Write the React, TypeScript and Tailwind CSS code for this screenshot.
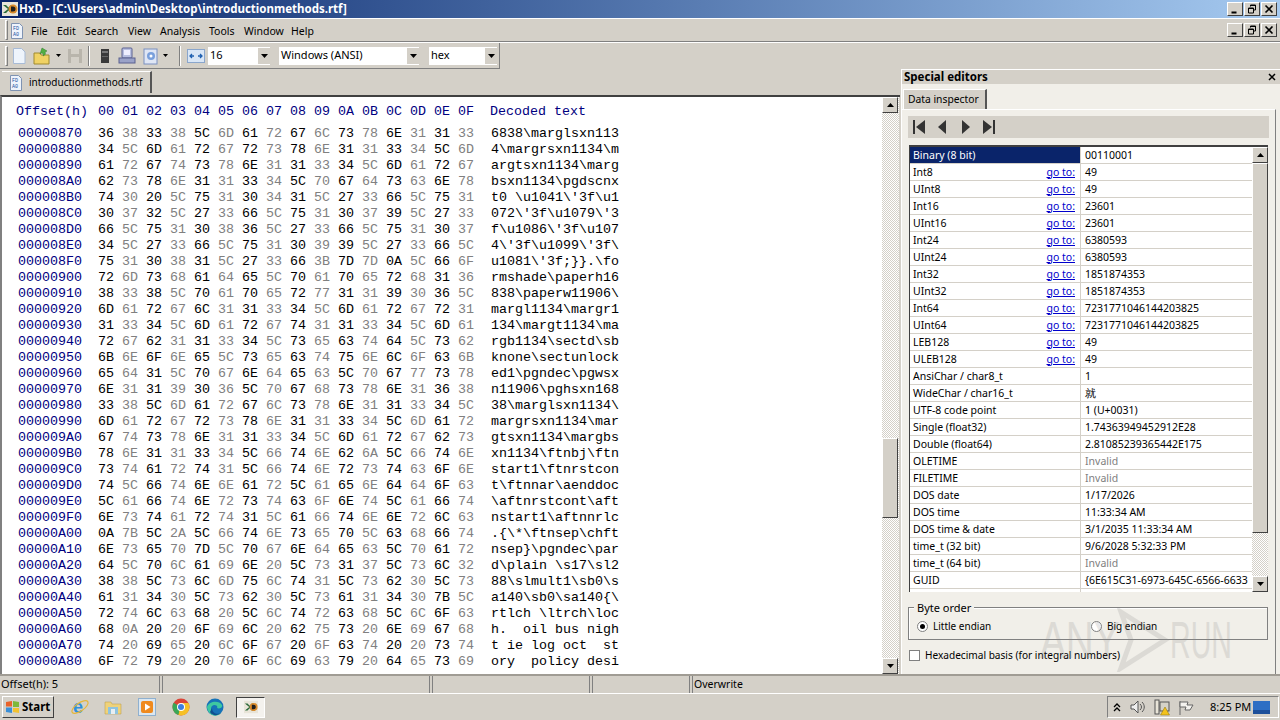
import React from "react";

const hexRows = [
  "36 38 33 38 5C 6D 61 72 67 6C 73 78 6E 31 31 33",
  "34 5C 6D 61 72 67 72 73 78 6E 31 31 33 34 5C 6D",
  "61 72 67 74 73 78 6E 31 31 33 34 5C 6D 61 72 67",
  "62 73 78 6E 31 31 33 34 5C 70 67 64 73 63 6E 78",
  "74 30 20 5C 75 31 30 34 31 5C 27 33 66 5C 75 31",
  "30 37 32 5C 27 33 66 5C 75 31 30 37 39 5C 27 33",
  "66 5C 75 31 30 38 36 5C 27 33 66 5C 75 31 30 37",
  "34 5C 27 33 66 5C 75 31 30 39 39 5C 27 33 66 5C",
  "75 31 30 38 31 5C 27 33 66 3B 7D 7D 0A 5C 66 6F",
  "72 6D 73 68 61 64 65 5C 70 61 70 65 72 68 31 36",
  "38 33 38 5C 70 61 70 65 72 77 31 31 39 30 36 5C",
  "6D 61 72 67 6C 31 31 33 34 5C 6D 61 72 67 72 31",
  "31 33 34 5C 6D 61 72 67 74 31 31 33 34 5C 6D 61",
  "72 67 62 31 31 33 34 5C 73 65 63 74 64 5C 73 62",
  "6B 6E 6F 6E 65 5C 73 65 63 74 75 6E 6C 6F 63 6B",
  "65 64 31 5C 70 67 6E 64 65 63 5C 70 67 77 73 78",
  "6E 31 31 39 30 36 5C 70 67 68 73 78 6E 31 36 38",
  "33 38 5C 6D 61 72 67 6C 73 78 6E 31 31 33 34 5C",
  "6D 61 72 67 72 73 78 6E 31 31 33 34 5C 6D 61 72",
  "67 74 73 78 6E 31 31 33 34 5C 6D 61 72 67 62 73",
  "78 6E 31 31 33 34 5C 66 74 6E 62 6A 5C 66 74 6E",
  "73 74 61 72 74 31 5C 66 74 6E 72 73 74 63 6F 6E",
  "74 5C 66 74 6E 6E 61 72 5C 61 65 6E 64 64 6F 63",
  "5C 61 66 74 6E 72 73 74 63 6F 6E 74 5C 61 66 74",
  "6E 73 74 61 72 74 31 5C 61 66 74 6E 6E 72 6C 63",
  "0A 7B 5C 2A 5C 66 74 6E 73 65 70 5C 63 68 66 74",
  "6E 73 65 70 7D 5C 70 67 6E 64 65 63 5C 70 61 72",
  "64 5C 70 6C 61 69 6E 20 5C 73 31 37 5C 73 6C 32",
  "38 38 5C 73 6C 6D 75 6C 74 31 5C 73 62 30 5C 73",
  "61 31 34 30 5C 73 62 30 5C 73 61 31 34 30 7B 5C",
  "72 74 6C 63 68 20 5C 6C 74 72 63 68 5C 6C 6F 63",
  "68 0A 20 20 6F 69 6C 20 62 75 73 20 6E 69 67 68",
  "74 20 69 65 20 6C 6F 67 20 6F 63 74 20 20 73 74",
  "6F 72 79 20 20 70 6F 6C 69 63 79 20 64 65 73 69",
];

const headerCols = ["00", "01", "02", "03", "04", "05", "06", "07", "08", "09", "0A", "0B", "0C", "0D", "0E", "0F"];

const inspector: { label: string; value: string; goto?: boolean; dim?: boolean }[] = [
  { label: "Binary (8 bit)", value: "00110001" },
  { label: "Int8", value: "49", goto: true },
  { label: "UInt8", value: "49", goto: true },
  { label: "Int16", value: "23601", goto: true },
  { label: "UInt16", value: "23601", goto: true },
  { label: "Int24", value: "6380593", goto: true },
  { label: "UInt24", value: "6380593", goto: true },
  { label: "Int32", value: "1851874353", goto: true },
  { label: "UInt32", value: "1851874353", goto: true },
  { label: "Int64", value: "7231771046144203825", goto: true },
  { label: "UInt64", value: "7231771046144203825", goto: true },
  { label: "LEB128", value: "49", goto: true },
  { label: "ULEB128", value: "49", goto: true },
  { label: "AnsiChar / char8_t", value: "1" },
  { label: "WideChar / char16_t", value: "就" },
  { label: "UTF-8 code point", value: "1 (U+0031)" },
  { label: "Single (float32)", value: "1.74363949452912E28" },
  { label: "Double (float64)", value: "2.81085239365442E175" },
  { label: "OLETIME", value: "Invalid", dim: true },
  { label: "FILETIME", value: "Invalid", dim: true },
  { label: "DOS date", value: "1/17/2026" },
  { label: "DOS time", value: "11:33:34 AM" },
  { label: "DOS time & date", value: "3/1/2035 11:33:34 AM" },
  { label: "time_t (32 bit)", value: "9/6/2028 5:32:33 PM" },
  { label: "time_t (64 bit)", value: "Invalid", dim: true },
  { label: "GUID", value: "{6E615C31-6973-645C-6566-6633" },
  { label: "Disassembly (x86-16)", value: "xor [bx+di+6Eh],bl" },
];

const menus: { name: string; w: string }[] = [
  { name: "File", w: "w-[26px]" },
  { name: "Edit", w: "w-[28px]" },
  { name: "Search", w: "w-[43px]" },
  { name: "View", w: "w-[32px]" },
  { name: "Analysis", w: "w-[49px]" },
  { name: "Tools", w: "w-[35px]" },
  { name: "Window", w: "w-[47px]" },
  { name: "Help", w: "w-[30px]" },
];

const raised = "border border-t-white border-l-white border-r-[#404040] border-b-[#404040] bg-[#d4d0c8]";
const dither = "bg-[repeating-conic-gradient(#d4d0c8_0%_25%,#ffffff_0%_50%)] bg-[length:2px_2px]";

function decode(row: string) {
  return row
    .split(" ")
    .map((h) => {
      const c = parseInt(h, 16);
      return c < 32 ? "." : String.fromCharCode(c);
    })
    .join("");
}

function DocIcon() {
  return (
    <svg width="16" height="16" viewBox="0 0 16 16">
      <path d="M2.500 .5h8l3 3v12h-11z" fill="#eef3fb" stroke="#7f93b2" />
      <text x="4" y="7" fontSize="5" fill="#2050a0" fontFamily="Liberation Mono">FD</text>
      <text x="4" y="13" fontSize="5" fill="#2050a0" fontFamily="Liberation Mono">A0</text>
    </svg>
  );
}

function HxdIcon({ size = 16 }: { size?: number }) {
  return (
    <svg width={size} height={size} viewBox="0 0 16 16">
      <rect x="0" y="1" width="16" height="14" fill="#e8e4d8" />
      <path d="M1 4l5 4-5 4h3l2.500-2.500L9 12h2L8 8l3-4H9L6.500 6.500 4 4z" fill="#2a6a3a" />
      <circle cx="11" cy="8" r="4.500" fill="#d98a2b" />
      <path d="M9 5.500h2a2.500 2.500 0 010 5H9z" fill="#1e1e1e" />
    </svg>
  );
}

function WinButton({ kind }: { kind: "min" | "max" | "close" }) {
  return (
    <div className={`flex h-[14px] w-[16px] items-center justify-center ${raised}`}>
      <svg width="10" height="10" viewBox="0 0 10 10" fill="none" stroke="#000">
        {kind === "min" && <path d="M1.500 8.500h5" strokeWidth="2" />}
        {kind === "max" && (
          <>
            <path d="M3.500 2.500v-1.500h5v5h-2" strokeWidth="1" />
            <path d="M1.500 4h5v5h-5z" strokeWidth="1" />
            <path d="M1.500 4.500h5M3.500 1.500h5" strokeWidth="1" />
          </>
        )}
        {kind === "close" && <path d="M1.500 1.500l7 7M8.500 1.500l-7 7" strokeWidth="1.600" />}
      </svg>
    </div>
  );
}

function Combo({ text, w }: { text: string; w: string }) {
  return (
    <div className={`flex h-[18px] items-center bg-white ${w}`}>
      <span className="flex-1 truncate pl-[2px] text-[11px] text-black">{text}</span>
      <div className="flex h-[16px] w-[12px] items-center justify-center bg-[#d4d0c8]">
        <svg width="7" height="4" viewBox="0 0 7 4"><path d="M0 0h7L3.500 4z" fill="#000" /></svg>
      </div>
    </div>
  );
}

function Grip() {
  return <div className="h-[20px] w-[3px] border border-t-white border-l-white border-r-[#808080] border-b-[#808080]" />;
}

function Caret() {
  return (
    <svg width="5" height="3" viewBox="0 0 5 3" className="ml-[4px]"><path d="M0 0h5L2.500 3z" fill="#000" /></svg>
  );
}

function ScrollBtn({ up }: { up: boolean }) {
  return (
    <div className={`flex h-[16px] w-[16px] shrink-0 items-center justify-center ${raised}`}>
      <svg width="7" height="4" viewBox="0 0 7 4">
        <path d={up ? "M0 4h7L3.500 0z" : "M0 0h7L3.500 4z"} fill="#000" />
      </svg>
    </div>
  );
}

function NavIcon({ kind }: { kind: "first" | "prev" | "next" | "last" }) {
  return (
    <svg width="15" height="14" viewBox="0 0 15 14" fill="#333">
      {kind === "first" && (<><rect x="1" y="0" width="2" height="14" /><path d="M13 0v14L4 7z" /></>)}
      {kind === "prev" && <path d="M11 0v14L3 7z" />}
      {kind === "next" && <path d="M4 0v14l8-7z" />}
      {kind === "last" && (<><rect x="12" y="0" width="2" height="14" /><path d="M2 0v14l9-7z" /></>)}
    </svg>
  );
}

function TaskIcons() {
  return (
    <div className="flex items-center">
      {/* IE */}
      <svg width="20" height="20" viewBox="0 0 20 20" className="ml-[16px]">
        <text x="3" y="16" fontSize="18" fontWeight="700" fill="#2f8fdc" fontFamily="Liberation Sans">e</text>
        <ellipse cx="10" cy="10" rx="9.500" ry="4" fill="none" stroke="#e5b73b" strokeWidth="1.200" transform="rotate(-35 10 10)" />
      </svg>
      {/* Explorer */}
      <svg width="18" height="18" viewBox="0 0 18 18" className="ml-[14px]">
        <path d="M1 4h6l1 2h9v10H1z" fill="#efd27a" stroke="#b99a45" strokeWidth=".5" />
        <path d="M4 9h10v7H4z" fill="#8fc3df" />
        <rect x="7" y="11" width="4" height="5" fill="#e8eef2" />
      </svg>
      {/* WMP */}
      <svg width="18" height="18" viewBox="0 0 18 18" className="ml-[16px]">
        <rect x=".5" y=".5" width="17" height="17" fill="#dbe7f1" stroke="#8fb0cf" />
        <rect x="3" y="3" width="12" height="12" rx="2" fill="#ef8a1f" />
        <path d="M7 5.500v7l5.500-3.500z" fill="#fff" />
      </svg>
      {/* Chrome */}
      <svg width="18" height="18" viewBox="0 0 18 18" className="ml-[16px]">
        <circle cx="9" cy="9" r="8.500" fill="#db4437" />
        <path d="M9 9L1.600 4.800A8.500 8.500 0 006.500 17.100z" fill="#3aa757" />
        <path d="M9 5h7.500A8.500 8.500 0 019 17.500L6.500 17z" fill="#f6c026" />
        <circle cx="9" cy="9" r="4" fill="#fff" />
        <circle cx="9" cy="9" r="3" fill="#3f7fe0" />
      </svg>
      {/* Edge */}
      <svg width="18" height="18" viewBox="0 0 18 18" className="ml-[16px]">
        <circle cx="9" cy="9" r="8.500" fill="#1673b8" />
        <path d="M1 9C3 3 13 2 16 7c1 3-3 4-5 3 2-3-6-5-6 1 0 4 5 7 10 4-4 5-13 3-14-6z" fill="#3ec8a0" />
        <path d="M6 10c0 5 5 7 9 5-3 3-9 3-11-1z" fill="#0f4f8f" />
      </svg>
      {/* HxD button */}
      <div className="ml-[12px] flex h-[21px] w-[29px] items-center justify-center border border-t-[#404040] border-l-[#404040] border-r-white border-b-white bg-[#f4f2ee]">
        <HxdIcon size={14} />
      </div>
    </div>
  );
}

function Tray() {
  return (
    <div className="flex h-[22px] w-[172px] items-center border border-t-[#808080] border-l-[#808080] border-r-white border-b-white text-[11px]">
      <svg width="8" height="9" viewBox="0 0 8 9" fill="none" stroke="#000" strokeWidth="1.300" className="ml-[5px] shrink-0">
        <path d="M1 4l3-3 3 3M1 8l3-3 3 3" />
      </svg>
      <svg width="16" height="14" viewBox="0 0 16 14" fill="none" stroke="#555" className="ml-[9px] shrink-0">
        <path d="M1 5h3l4-4v12l-4-4H1z" fill="#eee" />
        <path d="M10 4c2 2 2 4 0 6M12 2c3 3 3 7 0 10" />
      </svg>
      <svg width="18" height="17" viewBox="0 0 18 17" className="ml-[7px] shrink-0">
        <rect x="2" y="1" width="4" height="14" fill="#e8e4d8" stroke="#555" />
        <rect x="7" y="3" width="9" height="9" fill="#d5d2c8" stroke="#555" />
        <path d="M12 8l4.500 8h-9z" fill="#f3c21b" stroke="#8a6d00" strokeWidth=".5" />
      </svg>
      <svg width="16" height="15" viewBox="0 0 16 15" fill="none" stroke="#666" className="ml-[7px] shrink-0">
        <path d="M2 1v14" />
        <path d="M2 2h8l-1 3h6l-3 5H7l1-3H2z" fill="#f4f2ee" />
      </svg>
      <span className="ml-[16px] w-[40px] shrink-0 whitespace-nowrap text-black">8:25 PM</span>
      <svg width="17" height="13" viewBox="0 0 17 13" className="ml-[3px] shrink-0">
        <rect width="17" height="13" fill="#2e6fc4" />
        <rect y="9" width="17" height="4" fill="#1d4f9a" />
      </svg>
    </div>
  );
}

export default function App() {
  return (
    <div className="relative flex h-[720px] w-[1280px] flex-col overflow-hidden bg-[#d4d0c8] font-['Noto_Sans',sans-serif] text-[11px] text-black">
      {/* Title bar */}
      <div className="flex h-[18px] shrink-0 items-center bg-gradient-to-r from-[#0a246a] to-[#a6caf0] pr-[3px]">
        <div className="ml-[2px] mr-px"><HxdIcon /></div>
        <span className="text-[11.500px] font-bold text-white">HxD - [C:\Users\admin\Desktop\introductionmethods.rtf]</span>
        <div className="ml-auto flex gap-[1px]">
          <WinButton kind="min" />
          <WinButton kind="max" />
          <WinButton kind="close" />
        </div>
      </div>
      <div className="h-px shrink-0 bg-white" />

      {/* Menu bar */}
      <div className="flex h-[23px] shrink-0 items-center border-b border-b-[#808080] pl-[5px] pr-[3px]">
        <Grip />
        <div className="ml-px mr-[6px] mt-px"><DocIcon /></div>
        <div className="mt-[3px] flex text-[10.500px]">
          {menus.map((m) => (
            <span key={m.name} className={m.w}>{m.name}</span>
          ))}
        </div>
        <div className="ml-auto flex gap-[1px]">
          <WinButton kind="min" />
          <WinButton kind="max" />
          <WinButton kind="close" />
        </div>
      </div>

      {/* Toolbar */}
      <div className="h-px shrink-0 bg-white" />
      <div className="flex h-[26px] w-[500px] shrink-0 items-center border-b border-r border-b-[#808080] border-r-[#808080] pl-[5px]">
        <Grip />
        <svg width="16" height="18" viewBox="0 0 16 18" className="ml-[3px]">
          <path d="M2.500 1.500h8l3.500 3.500v11.500H2.500z" fill="#eef4fc" stroke="#a8bbd6" />
        </svg>
        <svg width="19" height="18" viewBox="0 0 19 18" className="ml-[6px]">
          <path d="M1 6h6l1 2h8v9H1z" fill="#f0d264" stroke="#a08a30" />
          <path d="M9 1l5 3-2 1c1 2 0 3-2 4 1-2 0-3-2-3l-1 1z" fill="#52b043" stroke="#2f7d2a" strokeWidth=".5" />
        </svg>
        <Caret />
        <svg width="16" height="16" viewBox="0 0 16 16" className="ml-[6px]">
          <path d="M1 1h14v14H1z" fill="#b9b5ac" />
          <rect x="4" y="1" width="8" height="5" fill="#d4d0c8" />
          <rect x="4" y="9" width="8" height="6" fill="#d4d0c8" />
        </svg>
        <div className="ml-[5px] h-[20px] w-[2px] border-l border-r border-l-[#808080] border-r-white" />
        <svg width="14" height="16" viewBox="0 0 14 16" className="ml-[8px]">
          <rect x="3" y="1" width="8" height="14" fill="#3a3a3a" />
          <rect x="4" y="3" width="6" height="2" fill="#777" />
          <rect x="4" y="8" width="6" height="1" fill="#666" />
        </svg>
        <svg width="18" height="18" viewBox="0 0 18 18" className="ml-[6px]">
          <rect x="4" y="1" width="10" height="10" rx="1" fill="#b8bfe0" stroke="#5a6090" />
          <rect x="6" y="3" width="6" height="5" fill="#eef" />
          <rect x="1" y="11" width="16" height="5" fill="#9aa2c8" stroke="#5a6090" />
        </svg>
        <svg width="16" height="18" viewBox="0 0 16 18" className="ml-[7px]">
          <rect x="1" y="2" width="13" height="15" fill="#dfe6f5" stroke="#7a90c0" />
          <circle cx="8" cy="9" r="4" fill="#7aa0dc" />
          <circle cx="8" cy="9" r="1.500" fill="#fff" />
        </svg>
        <Caret />
        <div className="ml-[11px] h-[20px] w-[2px] border-l border-r border-l-[#808080] border-r-white" />
        <svg width="18" height="14" viewBox="0 0 18 14" className="ml-[6px]">
          <rect x=".5" y=".5" width="17" height="13" fill="#d9e6f6" stroke="#8aa6cc" />
          <path d="M3 7h4M5 5L3 7l2 2M15 7h-4M13 5l2 2-2 2" fill="none" stroke="#2060b0" strokeWidth="1.300" />
        </svg>
        <div className="ml-[3px]"><Combo text="16" w="w-[62px]" /></div>
        <div className="ml-[9px]"><Combo text="Windows (ANSI)" w="w-[140px]" /></div>
        <div className="ml-[10px]"><Combo text="hex" w="w-[68px]" /></div>
      </div>

      {/* Workspace */}
      <div className="flex min-h-0 flex-1">
        <div className="flex w-[900px] shrink-0 flex-col">
          {/* Tab strip */}
          <div className="flex h-[26px] shrink-0 items-start pl-[2px] pt-[2px]">
            <div className="flex h-[22px] w-[150px] items-center border-r-2 border-t border-r-[#555] border-t-white pl-[6px]">
              <DocIcon />
              <span className="ml-[5px] text-[10px]">introductionmethods.rtf</span>
            </div>
          </div>

          {/* Hex view */}
          <div className="flex min-h-0 flex-1 border-l-2 border-t-2 border-l-[#808080] border-t-[#404040] bg-white">
            <div className="min-w-0 flex-1 whitespace-pre font-['Liberation_Mono',monospace] text-[13.330px] leading-4">
              <div className="ml-[14px] mt-[7px] mb-[6px] flex text-[#000080]">
                <span className="w-[82px]">Offset(h)</span>
                {headerCols.map((c) => (
                  <span key={c} className="w-[24px]">{c}</span>
                ))}
                <span className="ml-[8px]">Decoded text</span>
              </div>
              {hexRows.map((row, i) => (
                <div key={i} className="ml-[16px] flex">
                  <span className="w-[80px] text-[#000080]">{(0x870 + i * 16).toString(16).toUpperCase().padStart(8, "0")}</span>
                  {row.split(" ").map((b, j) => (
                    <span key={j} className={`w-[24px] ${j % 2 === 0 ? "text-black" : "text-[#808080]"}`}>{b}</span>
                  ))}
                  <span className="ml-[9px] text-black">{decode(row)}</span>
                </div>
              ))}
            </div>
            <div className={`flex w-[17px] shrink-0 flex-col ${dither}`}>
              <ScrollBtn up />
              <div className={`mt-[325px] h-[80px] w-[16px] ${raised}`} />
              <div className="flex-1" />
              <ScrollBtn up={false} />
            </div>
            <div className="w-px bg-[#d4d0c8]" />
          </div>
        </div>

        {/* Special editors */}
        <div className="ml-px flex min-w-0 flex-1 flex-col border-t border-l border-t-white border-l-white bg-[#f1efe9]">
          <div className="flex h-[14px] shrink-0 items-center justify-between bg-[#d4d0c8] pl-[2px] pr-[4px]">
            <span className="text-[11.500px] font-bold">Special editors</span>
            <svg width="8" height="8" viewBox="0 0 8 8" fill="none" stroke="#000" strokeWidth="1.500"><path d="M1 1l6 6M7 1L1 7" /></svg>
          </div>
          <div className="flex h-[25px] shrink-0 items-end pl-[1px]">
            <div className="flex h-[20px] w-[84px] items-center border-t border-l border-r-2 border-t-white border-l-white border-r-[#555] bg-[#d4d0c8] pl-[4px] text-[10.300px]">
              Data inspector
            </div>
          </div>
          <div className="mr-[4px] flex min-h-0 flex-1 flex-col border-t border-r border-t-white border-r-[#808080] pl-[6px] pr-[7px]">
            <div className="mt-[6px] -mr-px flex h-[22px] shrink-0 items-center gap-[8px] bg-[#d4d0c8] pl-[4px]">
              <NavIcon kind="first" />
              <NavIcon kind="prev" />
              <NavIcon kind="next" />
              <NavIcon kind="last" />
            </div>

            <div className="ml-px mt-[7px] flex h-[447px] shrink-0 overflow-hidden border-t-2 border-l border-t-[#404040] border-l-[#404040] bg-white text-[10.500px]">
              <div className="min-w-0 flex-1 overflow-hidden">
                {inspector.map((row, i) => (
                  <div key={row.label} className="flex h-[17px] shrink-0 border-b border-b-[#d4d0c8]">
                    <div className={`flex w-[171px] items-center justify-between border-r border-r-[#d4d0c8] pl-[3px] pr-[5px] pt-px ${i === 0 ? "bg-[#0a246a] text-white" : ""}`}>
                      <span>{row.label}</span>
                      {row.goto && <span className="text-[#0000cc] underline">go to:</span>}
                    </div>
                    <div className={`min-w-0 flex-1 overflow-hidden whitespace-nowrap pl-[4px] leading-[16px] ${row.dim ? "text-[#808080]" : ""}`}>
                      {row.value}
                    </div>
                  </div>
                ))}
              </div>
              <div className={`flex w-[16px] shrink-0 flex-col ${dither}`}>
                <ScrollBtn up />
                <div className={`h-[370px] w-[16px] ${raised}`} />
                <div className="flex-1" />
                <ScrollBtn up={false} />
              </div>
            </div>

            {/* Byte order */}
            <div className="relative mt-[15px] flex h-[33px] shrink-0 items-center border border-[#808080] shadow-[inset_1px_1px_0_#fff]">
              <span className="absolute -top-[8px] left-[5px] bg-[#f1efe9] px-[3px]">Byte order</span>
              <div className="ml-[8px] flex w-[174px] items-center gap-[5px] pt-[6px] text-[10px]">
                <span className="flex h-[11px] w-[11px] items-center justify-center rounded-full border border-[#808080] bg-white">
                  <span className="h-[5px] w-[5px] rounded-full bg-black" />
                </span>
                Little endian
              </div>
              <div className="flex items-center gap-[5px] pt-[6px] text-[10px]">
                <span className="h-[11px] w-[11px] rounded-full border border-[#808080] bg-white" />
                Big endian
              </div>
            </div>
            <div className="ml-px mt-[8px] flex items-center gap-[5px] text-[10.100px]">
              <span className="h-[11px] w-[11px] border border-[#808080] bg-white" />
              Hexadecimal basis (for integral numbers)
            </div>
          </div>
        </div>
      </div>

      {/* Status bar */}
      <div className="flex h-[19px] shrink-0 border-t-2 border-t-[#a09c94]">
        <div className="w-[160px] border-r border-r-[#808080] pl-px leading-[16px]">Offset(h): 5</div>
        <div className="ml-[2px] w-[268px] border-x border-x-[#808080]" />
        <div className="ml-[2px] w-[158px] border-x border-x-[#808080]" />
        <div className="ml-[2px] w-[98px] border-x border-x-[#808080]" />
        <div className="ml-[2px] flex-1 border-l border-l-[#808080] pl-px text-[10.500px] leading-[16px]">Overwrite</div>
      </div>
      <div className="h-px shrink-0 bg-white" />

      {/* Taskbar */}
      <div className="flex h-[26px] shrink-0 items-center pl-[2px] pr-px">
        <div className={`flex h-[22px] w-[52px] items-center gap-[2px] pl-[2px] ${raised}`}>
          <svg width="15" height="14" viewBox="0 0 15 14">
            <path d="M1 2l6-1v5.500H1z" fill="#e8622a" />
            <path d="M8 1l6 1v5H8z" fill="#7db83a" />
            <path d="M1 7.500h6V13l-6-1z" fill="#3a8fd8" />
            <path d="M8 8h6v5l-6-1z" fill="#f2c230" />
          </svg>
          <span className="text-[11.500px] font-bold">Start</span>
        </div>
        <TaskIcons />
        <div className="ml-auto"><Tray /></div>
      </div>

      {/* ANY.RUN watermark */}
      <div className="pointer-events-none absolute left-[1040px] top-[608px] flex items-center font-['Liberation_Sans',sans-serif] text-[51px] leading-none text-[#8a8a8a] opacity-20">
        <span className="w-[75px] origin-left scale-x-[0.76]">ANY</span>
        <svg width="55" height="64" viewBox="0 0 55 64" fill="none" stroke="#8a8a8a" strokeWidth="5"><path d="M6 4l44 28L6 60l10-28z" /></svg>
        <span className="w-[62px] origin-left scale-x-[0.56]">RUN</span>
      </div>
    </div>
  );
}
